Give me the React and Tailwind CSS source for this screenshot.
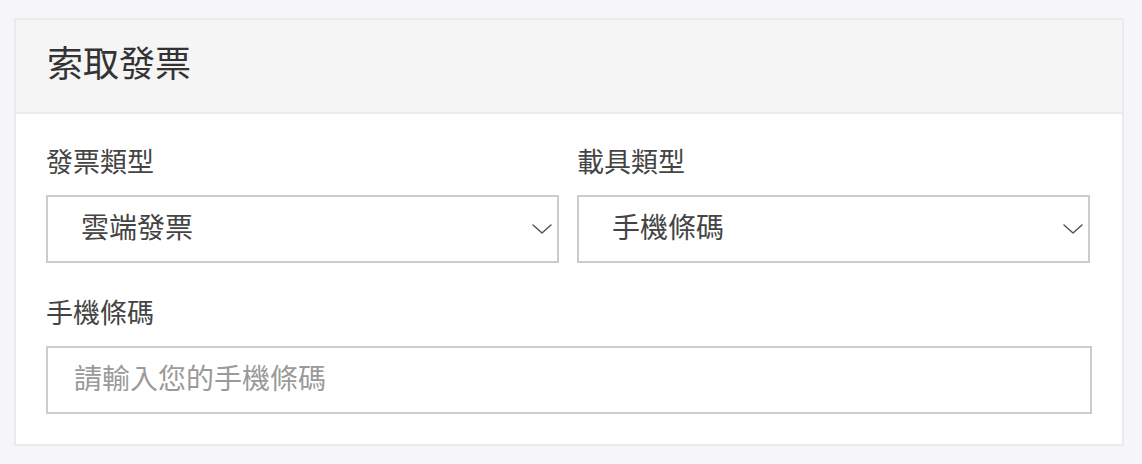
const FONT = "font-['Liberation_Sans','Noto_Sans_CJK_TC',sans-serif]";

function Chevron() {
    return (
        <svg className="w-[20px] h-[10px] text-[#555]" viewBox="0 0 20 10" fill="none" stroke="currentColor">
            <path d="M1 1l9 8 9-8" strokeWidth="1.5" strokeLinecap="round" strokeLinejoin="round" />
        </svg>
    );
}

function SelectBox({ value }) {
    return (
        <div className="h-[68px] border-2 border-[#cccccc] bg-white flex items-center justify-between pl-[33px] pr-[5px]">
            <span className="text-[28px] leading-none text-[#444]">{value}</span>
            <Chevron />
        </div>
    );
}

export default function App() {
    return (
        <div className={`min-h-screen bg-[#f6f6f8] pt-[18px] pl-[14px] pr-[18px] ${FONT}`}>
            <div className="w-[1110px] h-[428px] border-2 border-[#ebebeb] bg-white">
                {/* Header */}
                <div className="h-[94px] bg-[#f5f5f5] border-b-2 border-[#ebebeb] pl-[31px] flex items-center">
                    <h1 className="text-[36px] leading-none text-[#333] pb-[2px]">索取發票</h1>
                </div>

                {/* Form */}
                <div className="pl-[30px] pr-[30px] pt-[30px]">
                    <div className="grid grid-cols-[513px_513px] gap-x-[18px]">
                        <div>
                            <label className="block text-[27px] leading-[38px] text-[#444] mb-[13px]">發票類型</label>
                            <SelectBox value="雲端發票" />
                        </div>
                        <div>
                            <label className="block text-[27px] leading-[38px] text-[#444] mb-[13px]">載具類型</label>
                            <SelectBox value="手機條碼" />
                        </div>
                    </div>

                    <div className="mt-[32px] w-[1046px]">
                        <label className="block text-[27px] leading-[38px] text-[#444] mb-[13px]">手機條碼</label>
                        <input
                            type="text"
                            placeholder="請輸入您的手機條碼"
                            className="w-full h-[68px] border-2 border-[#cccccc] px-[26px] text-[28px] text-[#444] placeholder:text-[#9a9a9a] outline-none"
                        />
                    </div>
                </div>
            </div>
        </div>
    );
}
